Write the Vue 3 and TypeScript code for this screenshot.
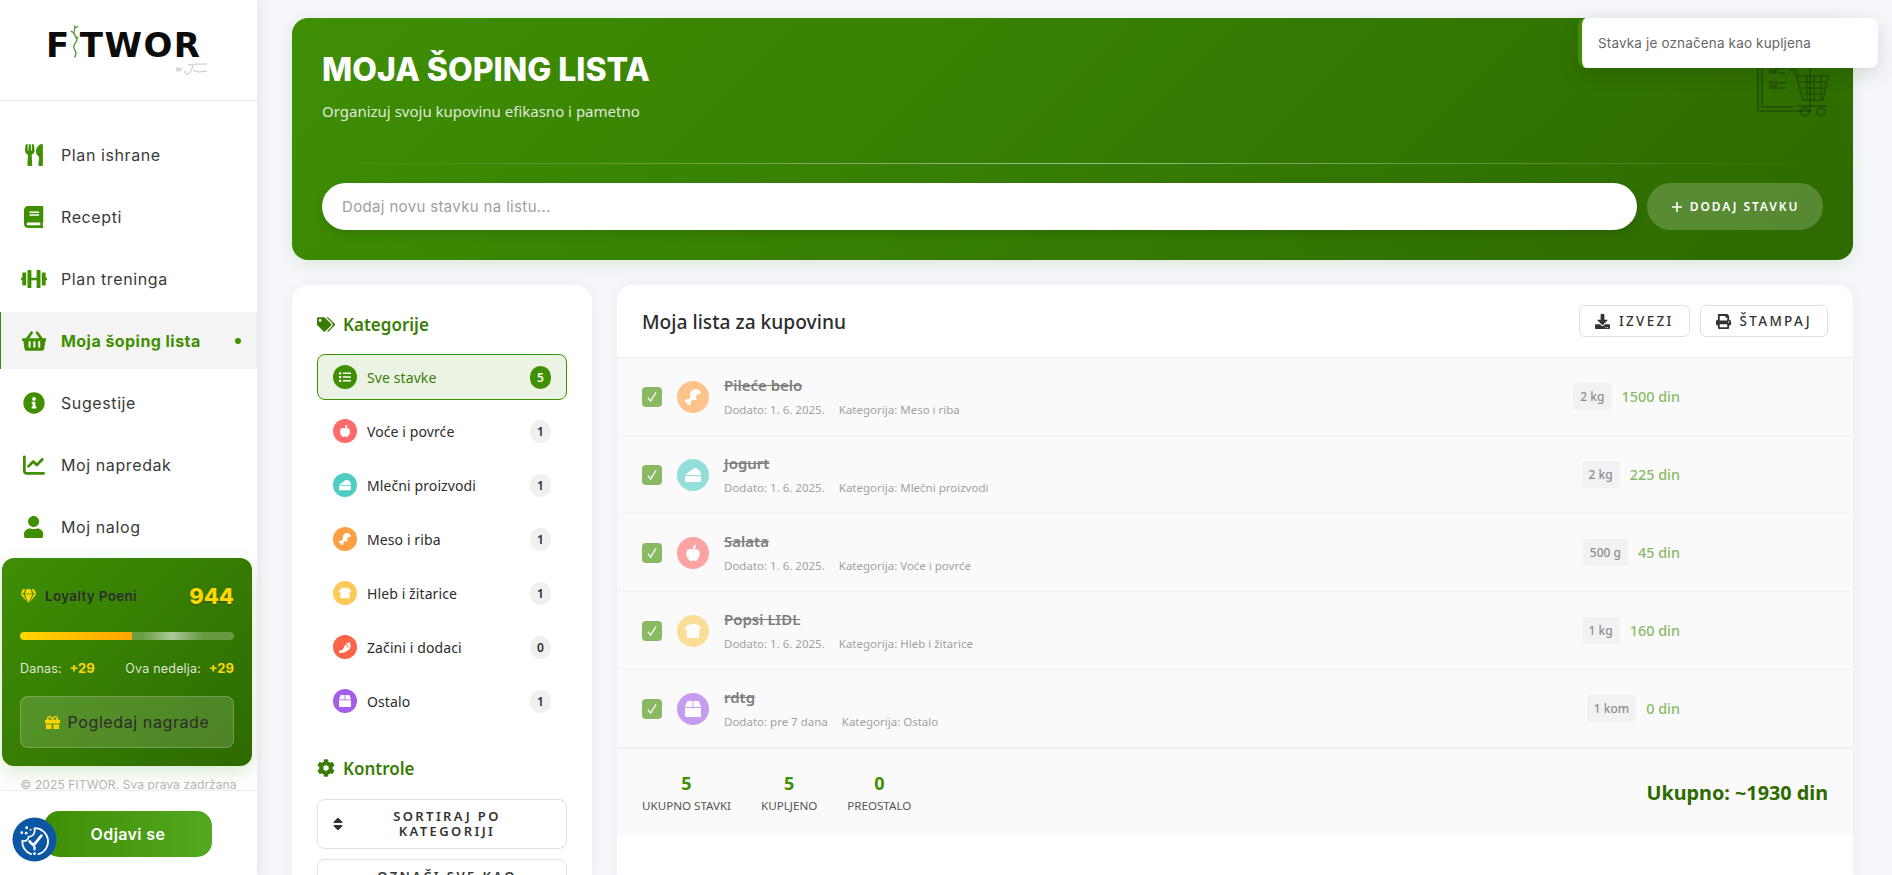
<script setup lang="ts">
const icons: Record<string, { box: string; d: string }> = {
  utensils: { box: '0 0 416 512', d: 'M207.9 15.2c.8 4.7 16.1 94.5 16.1 128.8 0 52.3-27.8 89.6-68.9 104.6L168 486.7c.7 13.7-10.2 25.3-24 25.3H80c-13.7 0-24.7-11.5-24-25.3l12.9-238.1C27.7 233.6 0 196.2 0 144 0 109.6 15.3 19.9 16.1 15.2 19.3-5.1 61.4-5.4 64 16.3v141.2c1.3 3.4 15.1 3.2 16 0 1.4-25.3 7.9-139.2 8-141.8 3.3-20.8 44.7-20.8 47.9 0 .2 2.7 6.6 116.5 8 141.8.9 3.2 14.8 3.4 16 0V16.3c2.6-21.6 44.8-21.4 48-1.1zm119.2 285.7l-15 185.1c-1.2 14 9.9 26 23.9 26h56c13.3 0 24-10.7 24-24V24c0-13.2-10.7-24-24-24-82.5 0-221.4 178.5-64.9 300.9z' },
  book: { box: '0 0 448 512', d: 'M448 360V24c0-13.3-10.7-24-24-24H96C43 0 0 43 0 96v320c0 53 43 96 96 96h328c13.3 0 24-10.7 24-24v-16c0-7.5-3.5-14.3-8.9-18.7-4.2-15.4-4.2-59.3 0-74.7 5.4-4.3 8.9-11.1 8.9-18.6zM128 134c0-3.3 2.7-6 6-6h212c3.3 0 6 2.7 6 6v20c0 3.3-2.7 6-6 6H134c-3.3 0-6-2.7-6-6v-20zm0 64c0-3.3 2.7-6 6-6h212c3.3 0 6 2.7 6 6v20c0 3.3-2.7 6-6 6H134c-3.3 0-6-2.7-6-6v-20zm253.4 250H96c-17.7 0-32-14.3-32-32 0-17.6 14.4-32 32-32h285.4c-1.9 17.1-1.9 46.9 0 64z' },
  dumbbell: { box: '0 0 640 512', d: 'M104 96H56c-13.3 0-24 10.7-24 24v104H8c-4.4 0-8 3.6-8 8v48c0 4.4 3.6 8 8 8h24v104c0 13.3 10.7 24 24 24h48c13.3 0 24-10.7 24-24V120c0-13.3-10.7-24-24-24zm528 128h-24V120c0-13.3-10.7-24-24-24h-48c-13.3 0-24 10.7-24 24v272c0 13.3 10.7 24 24 24h48c13.3 0 24-10.7 24-24V288h24c4.4 0 8-3.6 8-8v-48c0-4.4-3.6-8-8-8zM456 32h-48c-13.3 0-24 10.7-24 24v168H256V56c0-13.3-10.7-24-24-24h-48c-13.3 0-24 10.7-24 24v400c0 13.3 10.7 24 24 24h48c13.3 0 24-10.7 24-24V288h128v168c0 13.3 10.7 24 24 24h48c13.3 0 24-10.7 24-24V56c0-13.3-10.7-24-24-24z' },
  basket: { box: '0 0 576 512', d: 'M576 216v16c0 13.255-10.745 24-24 24h-8l-26.113 182.788C514.509 462.435 494.257 480 470.37 480H105.63c-23.887 0-44.139-17.565-47.518-41.212L32 256h-8c-13.255 0-24-10.745-24-24v-16c0-13.255 10.745-24 24-24h67.341l106.78-146.821c10.395-14.292 30.407-17.453 44.701-7.058 14.293 10.395 17.453 30.408 7.058 44.701L170.477 192h235.046L326.12 82.821c-10.395-14.292-7.234-34.306 7.059-44.701 14.291-10.395 34.306-7.235 44.701 7.058L484.659 192H552c13.255 0 24 10.745 24 24zM312 392V280c0-13.255-10.745-24-24-24s-24 10.745-24 24v112c0 13.255 10.745 24 24 24s24-10.745 24-24zm112 0V280c0-13.255-10.745-24-24-24s-24 10.745-24 24v112c0 13.255 10.745 24 24 24s24-10.745 24-24zm-224 0V280c0-13.255-10.745-24-24-24s-24 10.745-24 24v112c0 13.255 10.745 24 24 24s24-10.745 24-24z' },
  info: { box: '0 0 512 512', d: 'M256 8C119.043 8 8 119.083 8 256c0 136.997 111.043 248 248 248s248-111.003 248-248C504 119.083 392.957 8 256 8zm0 110c23.196 0 42 18.804 42 42s-18.804 42-42 42-42-18.804-42-42 18.804-42 42-42zm56 254c0 6.627-5.373 12-12 12h-88c-6.627 0-12-5.373-12-12v-24c0-6.627 5.373-12 12-12h12v-64h-12c-6.627 0-12-5.373-12-12v-24c0-6.627 5.373-12 12-12h64c6.627 0 12 5.373 12 12v100h12c6.627 0 12 5.373 12 12v24z' },
  chart: { box: '0 0 512 512', d: 'M64 64c0-17.7-14.3-32-32-32S0 46.3 0 64V400c0 44.2 35.8 80 80 80H480c17.7 0 32-14.3 32-32s-14.3-32-32-32H80c-8.8 0-16-7.2-16-16V64zm406.6 86.6c12.5-12.5 12.5-32.8 0-45.3s-32.8-12.5-45.3 0L320 210.7l-57.4-57.4c-12.5-12.5-32.8-12.5-45.3 0l-112 112c-12.5 12.5-12.5 32.8 0 45.3s32.8 12.5 45.3 0L240 221.3l57.4 57.4c12.5 12.5 32.8 12.5 45.3 0l128-128z' },
  user: { box: '0 0 448 512', d: 'M224 256c70.7 0 128-57.3 128-128S294.7 0 224 0 96 57.3 96 128s57.3 128 128 128zm89.6 32h-16.7c-22.2 10.2-46.9 16-72.9 16s-50.6-5.8-72.9-16h-16.7C60.2 288 0 348.2 0 422.4V464c0 26.5 21.5 48 48 48h352c26.5 0 48-21.5 48-48v-41.6c0-74.2-60.2-134.4-134.4-134.4z' },
  gem: { box: '0 0 576 512', d: 'M485.5 0L576 160H474.9L405.7 0h79.8zm-128 0l69.2 160H149.3L218.5 0h139zm-267 0h79.8l-69.2 160H0L90.5 0zM0 192h100.7l123 251.7c1.5 3.1-2.7 5.9-5 3.3L0 192zm148.2 0h279.6l-137 318.2c-1 2.4-4.5 2.4-5.5 0L148.2 192zm204.1 251.7l123-251.7H576L357.3 446.9c-2.3 2.7-6.5-.1-5-3.2z' },
  gift: { box: '0 0 512 512', d: 'M32 448c0 17.7 14.3 32 32 32h160V320H32v128zm256 32h160c17.7 0 32-14.3 32-32V320H288v160zm192-320h-42.1c6.2-12.1 10.1-25.5 10.1-40 0-48.5-39.5-88-88-88-41.6 0-68.5 21.3-103 68.3-34.5-47-61.4-68.3-103-68.3-48.5 0-88 39.5-88 88 0 14.5 3.8 27.9 10.1 40H32c-17.7 0-32 14.3-32 32v80c0 8.8 7.2 16 16 16h480c8.8 0 16-7.2 16-16v-80c0-17.7-14.3-32-32-32zm-326.1 0c-22.1 0-40-17.9-40-40s17.9-40 40-40c19.9 0 34.6 3.3 86.1 80h-86.1zm206.1 0h-86.1c51.4-76.5 65.7-80 86.1-80 22.1 0 40 17.9 40 40s-17.9 40-40 40z' },
  tags: { box: '0 0 640 512', d: 'M497.941 225.941L286.059 14.059A48 48 0 0 0 252.118 0H48C21.49 0 0 21.49 0 48v204.118a48 48 0 0 0 14.059 33.941l211.882 211.882c18.744 18.745 49.136 18.746 67.882 0l204.118-204.118c18.745-18.745 18.745-49.137 0-67.882zM112 160c-26.51 0-48-21.49-48-48s21.49-48 48-48 48 21.49 48 48-21.49 48-48 48zm513.941 133.823L421.823 497.941c-18.745 18.745-49.137 18.745-67.882 0l-.36-.36L527.64 323.522c16.999-16.999 26.36-39.6 26.36-63.64s-9.362-46.641-26.36-63.64L331.397 0h48.721a48 48 0 0 1 33.941 14.059l211.882 211.882c18.745 18.745 18.745 49.137 0 67.882z' },
  cog: { box: '0 0 512 512', d: 'M487.4 315.7l-42.6-24.6c4.3-23.2 4.3-47 0-70.2l42.6-24.6c4.9-2.8 7.1-8.6 5.5-14-11.1-35.6-30-67.8-54.7-94.6-3.8-4.1-10-5.1-14.8-2.3L380.8 110c-17.9-15.4-38.5-27.3-60.8-35.1V25.8c0-5.6-3.9-10.5-9.4-11.7-36.7-8.2-74.3-7.8-109.2 0-5.5 1.2-9.4 6.1-9.4 11.7V75c-22.2 7.9-42.8 19.8-60.8 35.1L88.7 85.5c-4.9-2.8-11-1.9-14.8 2.3-24.7 26.7-43.6 58.9-54.7 94.6-1.7 5.4.6 11.2 5.5 14L67.3 221c-4.3 23.2-4.3 47 0 70.2l-42.6 24.6c-4.9 2.8-7.1 8.6-5.5 14 11.1 35.6 30 67.8 54.7 94.6 3.8 4.1 10 5.1 14.8 2.3l42.6-24.6c17.9 15.4 38.5 27.3 60.8 35.1v49.2c0 5.6 3.9 10.5 9.4 11.7 36.7 8.2 74.3 7.8 109.2 0 5.5-1.2 9.4-6.1 9.4-11.7v-49.2c22.2-7.9 42.8-19.8 60.8-35.1l42.6 24.6c4.9 2.8 11 1.9 14.8-2.3 24.7-26.7 43.6-58.9 54.7-94.6 1.5-5.5-.7-11.3-5.6-14.1zM256 336c-44.1 0-80-35.9-80-80s35.9-80 80-80 80 35.9 80 80-35.9 80-80 80z' },
  list: { box: '0 0 512 512', d: 'M80 368H16a16 16 0 0 0-16 16v64a16 16 0 0 0 16 16h64a16 16 0 0 0 16-16v-64a16 16 0 0 0-16-16zm0-320H16A16 16 0 0 0 0 64v64a16 16 0 0 0 16 16h64a16 16 0 0 0 16-16V64a16 16 0 0 0-16-16zm0 160H16a16 16 0 0 0-16 16v64a16 16 0 0 0 16 16h64a16 16 0 0 0 16-16v-64a16 16 0 0 0-16-16zm416 176H176a16 16 0 0 0-16 16v32a16 16 0 0 0 16 16h320a16 16 0 0 0 16-16v-32a16 16 0 0 0-16-16zm0-320H176a16 16 0 0 0-16 16v32a16 16 0 0 0 16 16h320a16 16 0 0 0 16-16V80a16 16 0 0 0-16-16zm0 160H176a16 16 0 0 0-16 16v32a16 16 0 0 0 16 16h320a16 16 0 0 0 16-16v-32a16 16 0 0 0-16-16z' },
  apple: { box: '0 0 448 512', d: 'M326 130c-45-8-72 14-102 14s-57-22-102-14C62 140 10 190 10 270c0 110 78 242 150 242 28 0 44-18 64-18s36 18 64 18c72 0 150-132 150-242 0-80-52-130-112-140zM240 128c-9-2-16-10-16-20V80c0-44 36-80 80-80 9 0 16 7 16 16v32c0 44-36 80-80 80z' },
  cheese: { box: '0 0 512 512', d: 'M0 288v160a32 32 0 0 0 32 32h448a32 32 0 0 0 32-32V288zM299.83 32a32 32 0 0 0-21.13 7L0 256h512c0-119.89-94-217.8-212.17-224z' },
  drumstick: { box: '0 0 512 512', d: 'M462.8 49.57a169.44 169.44 0 0 0-239.5 0C187.82 85 160.13 128 160.13 192v85.83l-40.62 40.59c-9.7 9.69-24 11.07-36.78 6a60.33 60.33 0 0 0-65 98.72C33 438.39 54.24 442.7 73.85 438.21c-4.5 19.6-.18 40.83 15.1 56.1a60.35 60.35 0 0 0 98.8-65c-5.09-12.73-3.72-27 6-36.75L234.36 352h85.89a187.87 187.87 0 0 0 61.89-10c-39.64-43.89-39.83-110.23 1.05-151.07 34.38-34.36 86.76-39.46 128.74-16.8 1.3-44.96-14.81-90.28-49.13-124.56z' },
  bread: { box: '0 0 576 512', d: 'M288 0C108 0 0 93.4 0 169.14 0 199.44 24.24 224 64 224v256c0 17.67 16.12 32 36 32h376c19.88 0 36-14.33 36-32V224c39.76 0 64-24.56 64-54.86C576 93.4 468 0 288 0z' },
  pepper: { box: '0 0 512 512', d: 'M330.67 263.12V173.4l-52.75-24.22C219.44 218.76 197.58 400 56 400a56 56 0 0 0 0 112c212.64 0 370.65-122.87 419.18-210.34l-37.05-38.54zM462 135c32-60 15-93 5-102-2-2-6-2-9 0-4 5-10 20-23 54-16-10-35-15-51-15-35 0-64 21-78 54l56 26v87l60 8 47 48c22-30 34-63 34-94 0-24-16-42-41-66z' },
  box: { box: '0 0 512 512', d: 'M509.5 184.6L458.9 32.8C452.4 13.2 434.1 0 413.4 0H272v192h238.7c-.4-2.5-.4-5-1.2-7.4zM240 0H98.6c-20.7 0-39 13.2-45.5 32.8L2.5 184.6c-.8 2.4-.8 4.9-1.2 7.4H240V0zM0 224v240c0 26.5 21.5 48 48 48h416c26.5 0 48-21.5 48-48V224H0z' },
  sort: { box: '0 0 320 512', d: 'M41 288h238c21.4 0 32.1 25.9 17 41L177 448c-9.4 9.4-24.6 9.4-33.9 0L24 329c-15.1-15.1-4.4-41 17-41zm255-105L177 64c-9.4-9.4-24.6-9.4-33.9 0L24 183c-15.1 15.1-4.4 41 17 41h238c21.4 0 32.1-25.9 17-41z' },
  download: { box: '0 0 512 512', d: 'M216 0h80c13.3 0 24 10.7 24 24v168h87.7c17.8 0 26.7 21.5 14.1 34.1L269.7 378.3c-7.5 7.5-19.8 7.5-27.3 0L90.1 226.1c-12.6-12.6-3.7-34.1 14.1-34.1H192V24c0-13.3 10.7-24 24-24zm296 376v112c0 13.3-10.7 24-24 24H24c-13.3 0-24-10.7-24-24V376c0-13.3 10.7-24 24-24h146.7l49 49c20.1 20.1 52.5 20.1 72.6 0l49-49H488c13.3 0 24 10.7 24 24zm-124 88c0-11-9-20-20-20s-20 9-20 20 9 20 20 20 20-9 20-20zm64 0c0-11-9-20-20-20s-20 9-20 20 9 20 20 20 20-9 20-20z' },
  print: { box: '0 0 512 512', d: 'M448 192V77.25c0-8.49-3.37-16.62-9.37-22.63L393.37 9.37c-6-6-14.14-9.37-22.63-9.37H96C78.33 0 64 14.33 64 32v160c-35.35 0-64 28.65-64 64v112c0 8.84 7.16 16 16 16h48v96c0 17.67 14.33 32 32 32h320c17.67 0 32-14.33 32-32v-96h48c8.84 0 16-7.16 16-16V256c0-35.35-28.65-64-64-64zm-64 256H128v-96h256v96zm0-224H128V64h192v48c0 8.84 7.16 16 16 16h48v96zm48 72c-13.25 0-24-10.75-24-24 0-13.26 10.75-24 24-24s24 10.74 24 24c0 13.25-10.75 24-24 24z' }
}

const navItems = [
  { label: 'Plan ishrane', icon: 'utensils' },
  { label: 'Recepti', icon: 'book' },
  { label: 'Plan treninga', icon: 'dumbbell' },
  { label: 'Moja šoping lista', icon: 'basket', active: true },
  { label: 'Sugestije', icon: 'info' },
  { label: 'Moj napredak', icon: 'chart' },
  { label: 'Moj nalog', icon: 'user' }
]

const categories = [
  { label: 'Sve stavke', icon: 'list', color: '#3f8f00', count: 5, active: true },
  { label: 'Voće i povrće', icon: 'apple', color: '#ff6b6b', count: 1 },
  { label: 'Mlečni proizvodi', icon: 'cheese', color: '#4ecdc4', count: 1 },
  { label: 'Meso i riba', icon: 'drumstick', color: '#ff9f43', count: 1 },
  { label: 'Hleb i žitarice', icon: 'bread', color: '#feca57', count: 1 },
  { label: 'Začini i dodaci', icon: 'pepper', color: '#ff6348', count: 0 },
  { label: 'Ostalo', icon: 'box', color: '#a55eea', count: 1 }
]

const items = [
  { name: 'Pileće belo', added: '1. 6. 2025.', category: 'Meso i riba', icon: 'drumstick', color: '#ff9f43', qty: '2 kg', price: '1500 din' },
  { name: 'Jogurt', added: '1. 6. 2025.', category: 'Mlečni proizvodi', icon: 'cheese', color: '#4ecdc4', qty: '2 kg', price: '225 din' },
  { name: 'Salata', added: '1. 6. 2025.', category: 'Voće i povrće', icon: 'apple', color: '#ff6b6b', qty: '500 g', price: '45 din' },
  { name: 'Popsi LIDL', added: '1. 6. 2025.', category: 'Hleb i žitarice', icon: 'bread', color: '#feca57', qty: '1 kg', price: '160 din' },
  { name: 'rdtg', added: 'pre 7 dana', category: 'Ostalo', icon: 'box', color: '#a55eea', qty: '1 kom', price: '0 din' }
]

const stats = [
  { value: 5, label: 'Ukupno stavki' },
  { value: 5, label: 'Kupljeno' },
  { value: 0, label: 'Preostalo' }
]
</script>

<template>
  <div class="app">
    <aside class="sidebar">
      <div class="logo-box">
        <div class="logo">
          <span>F</span>
          <svg class="vine" viewBox="0 0 12 38" width="11" height="38">
            <path d="M6 2c3 4-3 6 0 10s4 5 1 9-2 6 0 9 0 4-1 7" fill="none" stroke="#4f9a33" stroke-width="1.5" />
            <path d="M6 5l4-2M5 10L2 8M7 16l3-1" fill="none" stroke="#4f9a33" stroke-width="1.3" />
          </svg>
          <span>TWOR</span>
          <span class="logo-sign">
            <i>by</i>
            <svg viewBox="0 0 26 14" width="26" height="14">
              <path d="M6 3c6-1 12-1 19-1M11 3c-1 4-2 8-5 9S2 10 4 8M11 9c2-1 4 1 6 1s5-1 8-1" fill="none" stroke="#aaa" stroke-width=".7" />
            </svg>
          </span>
        </div>
      </div>

      <div class="side-scroll">
        <nav class="nav">
          <a v-for="item in navItems" :key="item.label" class="nav-item" :class="{ active: item.active }">
            <span class="nav-icon">
              <svg :viewBox="icons[item.icon].box" fill="currentColor"><path :d="icons[item.icon].d" /></svg>
            </span>
            <span class="nav-label">{{ item.label }}</span>
            <span v-if="item.active" class="nav-dot"></span>
          </a>
        </nav>

        <section class="loyalty">
          <div class="loyalty-head">
            <svg class="gem" :viewBox="icons.gem.box" fill="currentColor"><path :d="icons.gem.d" /></svg>
            <span class="loyalty-title">Loyalty Poeni</span>
            <span class="loyalty-points">944</span>
          </div>
          <div class="bar"><div class="bar-fill"></div><div class="bar-shine"></div></div>
          <div class="loyalty-stats">
            <span>Danas: <b>+29</b></span>
            <span>Ova nedelja: <b>+29</b></span>
          </div>
          <button class="rewards">
            <svg :viewBox="icons.gift.box" fill="currentColor"><path :d="icons.gift.d" /></svg>
            Pogledaj nagrade
          </button>
        </section>
        <p class="copyright">© 2025 FITWOR. Sva prava zadržana</p>
      </div>

      <div class="side-foot">
        <button class="logout">Odjavi se</button>
      </div>
    </aside>

    <main class="main">
      <header class="banner">
        <h1>MOJA ŠOPING LISTA</h1>
        <p>Organizuj svoju kupovinu efikasno i pametno</p>
        <svg class="banner-art" viewBox="0 0 72 58" fill="none" stroke="currentColor" stroke-width="2">
          <path d="M1 1h52v50H1zM5 1v46h32" />
          <path d="M13 7h6v6h-6zM13 22h6v6h-6zM22 8h8M22 13h6M22 23h8M22 28h6M14 10l2 2 5-5M14 25l2 2 5-5" />
          <path d="M32 10h6l8 30h20l5-24H40M43 22h27M45 28h25M47 34h22M50 16v24M57 16v24M64 16v24" />
          <circle cx="48" cy="52" r="4" /><circle cx="64" cy="52" r="4" />
          <path d="M40 46h30" />
        </svg>
        <div class="banner-line"></div>
        <div class="add-row">
          <input class="add-input" type="text" placeholder="Dodaj novu stavku na listu..." />
          <button class="add-btn">
            <svg viewBox="0 0 12 12" width="12" height="12"><path d="M6 1v10M1 6h10" stroke="#fff" stroke-width="1.6" /></svg>
            DODAJ STAVKU
          </button>
        </div>
      </header>

      <div class="content">
        <section class="panel">
          <h3 class="panel-title">
            <svg class="tag-icon" :viewBox="icons.tags.box" fill="currentColor"><path :d="icons.tags.d" /></svg>
            Kategorije
          </h3>
          <ul class="cats">
            <li v-for="c in categories" :key="c.label" class="cat" :class="{ active: c.active }">
              <span class="cat-icon" :style="{ background: c.color }">
                <svg :viewBox="icons[c.icon].box" fill="#fff"><path :d="icons[c.icon].d" /></svg>
              </span>
              <span class="cat-label">{{ c.label }}</span>
              <span class="cat-count">{{ c.count }}</span>
            </li>
          </ul>

          <h3 class="panel-title controls-title">
            <svg class="cog-icon" :viewBox="icons.cog.box" fill="currentColor"><path :d="icons.cog.d" /></svg>
            Kontrole
          </h3>
          <button class="ctrl">
            <svg class="sort-icon" :viewBox="icons.sort.box" fill="currentColor"><path :d="icons.sort.d" /></svg>
            <span>SORTIRAJ PO KATEGORIJI</span>
          </button>
          <button class="ctrl">
            <svg class="sort-icon" :viewBox="icons.sort.box" fill="currentColor"><path :d="icons.sort.d" /></svg>
            <span>OZNAČI SVE KAO KUPLJENO</span>
          </button>
        </section>

        <section class="list-panel">
          <div class="list-head">
            <h2>Moja lista za kupovinu</h2>
            <div class="list-actions">
              <button class="tool">
                <svg :viewBox="icons.download.box" fill="currentColor"><path :d="icons.download.d" /></svg>
                IZVEZI
              </button>
              <button class="tool">
                <svg :viewBox="icons.print.box" fill="currentColor"><path :d="icons.print.d" /></svg>
                ŠTAMPAJ
              </button>
            </div>
          </div>

          <div v-for="item in items" :key="item.name" class="row">
            <span class="check">
              <svg viewBox="0 0 12 12" width="14" height="14"><path d="M2.5 6.5l2.3 3L9.5 2" fill="none" stroke="#fff" stroke-width="1.1" /></svg>
            </span>
            <span class="row-icon" :style="{ background: item.color }">
              <svg :viewBox="icons[item.icon].box" fill="#fff"><path :d="icons[item.icon].d" /></svg>
            </span>
            <div class="row-info">
              <div class="row-name">{{ item.name }}</div>
              <div class="row-meta">
                <span>Dodato: {{ item.added }}</span>
                <span>Kategorija: {{ item.category }}</span>
              </div>
            </div>
            <span class="qty">{{ item.qty }}</span>
            <span class="price">{{ item.price }}</span>
          </div>

          <div class="list-foot">
            <div class="stats">
              <div v-for="s in stats" :key="s.label" class="stat">
                <div class="stat-value">{{ s.value }}</div>
                <div class="stat-label">{{ s.label }}</div>
              </div>
            </div>
            <div class="total">Ukupno: ~1930 din</div>
          </div>
        </section>
      </div>
    </main>

    <div class="toast">Stavka je označena kao kupljena</div>

    <button class="cookie" aria-label="Kolačići">
      <svg viewBox="0 0 46 46" width="45" height="45">
        <circle cx="23" cy="23" r="22.5" fill="#0b57a4" />
        <g fill="none" stroke="#fff" stroke-linecap="round" stroke-linejoin="round">
          <path d="M10.5 24.5c3.5 1 6.5-1.5 6.5-4.5 3.5.5 7-2.5 6-8.5A13.5 13.5 0 0 1 27 38M19.5 38a13.5 13.5 0 0 1-9-13.5" stroke-width="1.8" />
          <path d="M18 25l4 4 8-10" stroke-width="2.8" />
          <path d="M23 31v2" stroke-width="2.4" />
        </g>
        <g fill="#fff"><circle cx="15" cy="11" r="1.5" /><circle cx="10" cy="16" r="1.4" /><circle cx="14.5" cy="16.5" r="1.4" /><circle cx="19" cy="13" r="1" /><circle cx="23" cy="37.5" r="1.4" /></g>
      </svg>
    </button>
  </div>
</template>

<style>
html, body { margin: 0; background: #f4f6f9; }
</style>

<style scoped>
* { box-sizing: border-box; }

.app {
  display: flex;
  height: 875px;
  overflow: hidden;
  position: relative;
  background: #f4f6f9;
  font-family: "Noto Sans", sans-serif;
  color: #2c2c2c;
}

button { font-family: inherit; cursor: pointer; }

/* sidebar */
.sidebar {
  width: 257px;
  flex: none;
  display: flex;
  flex-direction: column;
  background: #fff;
  box-shadow: 2px 0 12px rgba(0, 0, 0, 0.08);
  z-index: 2;
  font-family: Inter, sans-serif;
}

.logo-box {
  height: 101px;
  flex: none;
  padding: 28px 0 0 46px;
  border-bottom: 1px solid #ececec;
}

.logo {
  display: flex;
  align-items: flex-start;
  position: relative;
  font-family: "DejaVu Sans", sans-serif;
  font-size: 34px;
  font-weight: 700;
  line-height: 34px;
  color: #0c0c0c;
  letter-spacing: 1.5px;
}

.vine { margin: -6px 0 0 -2px; flex: none; }

.logo-sign {
  position: absolute;
  left: 130px;
  top: 34px;
  display: flex;
  align-items: center;
  font-family: "Liberation Serif", serif;
  font-size: 6px;
  line-height: 14px;
  font-weight: 400;
  color: #999;
  letter-spacing: 0;
}

.side-scroll {
  flex: 1;
  overflow: hidden;
  min-height: 0;
}

.nav {
  display: flex;
  flex-direction: column;
  gap: 5px;
  padding-top: 25px;
}

.nav-item {
  display: flex;
  align-items: center;
  height: 57px;
  padding: 0 16px 0 21px;
  font-size: 16px;
  letter-spacing: 0.6px;
  color: #3a3a3a;
}

.nav-item.active {
  background: #f4f4f4;
  border-left: 1px solid #3f8f00;
  padding-left: 20px;
  color: #3f8f00;
  font-weight: 700;
  letter-spacing: 0.45px;
}

.nav-icon {
  width: 26px;
  height: 22px;
  display: flex;
  justify-content: center;
  color: #3f8f00;
  margin-right: 14px;
}

.nav-icon svg { height: 22px; max-width: 27px; }

.nav-label { flex: 1; }

.nav-dot {
  width: 6px;
  height: 6px;
  border-radius: 50%;
  background: #3f8f00;
}

.loyalty {
  margin: 3px 5px 0 2px;
  height: 208px;
  padding: 18px 18px 0;
  border-radius: 12px;
  background: linear-gradient(135deg, #3f8f05 0%, #2d6a00 100%);
  box-shadow: 0 6px 20px rgba(63, 143, 0, 0.2);
}

.loyalty-head {
  display: flex;
  align-items: center;
  height: 40px;
}

.gem {
  width: 17px;
  height: 14px;
  color: #ffd700;
  margin-right: 8px;
}

.loyalty-title {
  flex: 1;
  font-size: 13.5px;
  font-weight: 600;
  letter-spacing: 0.3px;
  color: #2c2c2c;
}

.loyalty-points {
  font-size: 22px;
  font-weight: 800;
  color: #ffd700;
  text-shadow: 0 1px 2px rgba(0, 0, 0, 0.3);
}

.bar {
  height: 8px;
  margin-top: 16px;
  border-radius: 4px;
  background: rgba(255, 255, 255, 0.25);
  position: relative;
  overflow: hidden;
}

.bar-fill {
  width: 52.5%;
  height: 100%;
  background: linear-gradient(90deg, #ffd700, #ffa500);
  border-radius: 4px 0 0 4px;
}

.bar-shine {
  position: absolute;
  left: 122px;
  top: 0;
  width: 60px;
  height: 100%;
  background: linear-gradient(100deg, transparent, rgba(255, 255, 255, 0.45), transparent);
}

.loyalty-stats {
  display: flex;
  justify-content: space-between;
  margin-top: 19px;
  font-size: 12.5px;
  letter-spacing: 0.2px;
  line-height: 18px;
  color: rgba(255, 255, 255, 0.85);
}

.loyalty-stats b {
  color: #ffd700;
  font-size: 13px;
  font-weight: 700;
  letter-spacing: 0;
  margin-left: 4px;
}

.rewards {
  width: 100%;
  height: 52px;
  margin-top: 18px;
  display: flex;
  align-items: center;
  justify-content: center;
  gap: 8px;
  border: 1px solid rgba(255, 255, 255, 0.2);
  border-radius: 8px;
  background: rgba(255, 255, 255, 0.15);
  color: #2c2c2c;
  font-family: Inter, sans-serif;
  font-size: 16px;
  letter-spacing: 0.6px;
}

.rewards svg {
  width: 15px;
  height: 15px;
  color: #ffd700;
}

.copyright {
  margin: 10px 0 0;
  font-size: 12px;
  letter-spacing: 0.1px;
  line-height: 18px;
  text-align: center;
  color: #b4b4b4;
}

.side-foot {
  flex: none;
  height: 85px;
  border-top: 1px solid #ececec;
  padding: 20px 0 0 44px;
}

.logout {
  width: 168px;
  height: 46px;
  border: none;
  border-radius: 15px;
  background: linear-gradient(90deg, #3f8f05, #52a81f);
  color: #fff;
  font-family: Inter, sans-serif;
  font-size: 16px;
  font-weight: 600;
  letter-spacing: 0.4px;
}

/* main */
.main {
  flex: 1;
  min-width: 0;
  padding: 18px 39px 0 35px;
  display: flex;
  flex-direction: column;
}

.banner {
  height: 242px;
  flex: none;
  position: relative;
  padding: 30px 30px 0;
  border-radius: 16px;
  background: linear-gradient(135deg, #3f8f05 0%, #2d6a00 100%);
  box-shadow: 0 4px 14px rgba(63, 143, 0, 0.12);
}

.banner h1 {
  margin: 0;
  font-family: Inter, sans-serif;
  font-size: 32px;
  line-height: 44px;
  font-weight: 800;
  color: #fff;
}

.banner p {
  margin: 8px 0 0;
  font-size: 15px;
  line-height: 22px;
  color: rgba(255, 255, 255, 0.85);
}

.banner-art {
  position: absolute;
  right: 24px;
  top: 42px;
  width: 72px;
  height: 58px;
  color: rgba(0, 0, 0, 0.22);
}

.banner-line {
  position: absolute;
  left: 30px;
  right: 30px;
  top: 145px;
  height: 1px;
  background: linear-gradient(90deg, transparent, rgba(255, 255, 255, 0.5), transparent);
}

.add-row {
  display: flex;
  gap: 10px;
  margin-top: 61px;
  height: 47px;
}

.add-input {
  flex: 1;
  border: none;
  outline: none;
  padding: 0 20px;
  border-radius: 24px;
  background: #fff;
  font-family: Inter, sans-serif;
  font-size: 15px;
  box-shadow: 0 4px 10px rgba(0, 0, 0, 0.12);
}

.add-input::placeholder { color: #a0a0a0; opacity: 1; letter-spacing: 0.35px; }

.add-btn {
  width: 176px;
  display: flex;
  align-items: center;
  justify-content: center;
  gap: 7px;
  border: none;
  border-radius: 24px;
  background: rgba(255, 255, 255, 0.2);
  color: #fff;
  font-size: 12px;
  font-weight: 600;
  letter-spacing: 1.9px;
}

.content {
  display: flex;
  gap: 25px;
  margin-top: 25px;
  flex: 1;
  min-height: 0;
}

.panel {
  width: 300px;
  flex: none;
  padding: 24px 25px 25px;
  background: #fff;
  border-radius: 16px 16px 0 0;
  box-shadow: 0 2px 16px rgba(0, 0, 0, 0.04);
  overflow: hidden;
}

.panel-title {
  display: flex;
  align-items: center;
  margin: 0;
  height: 30px;
  font-size: 17px;
  font-weight: 600;
  color: #3a7d05;
}

.tag-icon { width: 18px; height: 15px; margin-right: 8px; }
.cog-icon { width: 18px; height: 18px; margin-right: 8px; }

.cats {
  list-style: none;
  margin: 15px 0 0;
  padding: 0;
  display: flex;
  flex-direction: column;
  gap: 8px;
}

.cat {
  display: flex;
  align-items: center;
  height: 46px;
  padding: 0 15px;
  border-radius: 8px;
  border: 1px solid transparent;
  font-size: 14px;
  letter-spacing: 0.1px;
}

.cat.active {
  background: #ebf3e5;
  border-color: #3f8f00;
  color: #3a7d05;
}

.cat-icon {
  width: 24px;
  height: 24px;
  flex: none;
  border-radius: 50%;
  display: flex;
  align-items: center;
  justify-content: center;
  margin-right: 10px;
}

.cat-icon svg { width: 12px; height: 12px; }

.cat-label { flex: 1; }

.cat-count {
  min-width: 21px;
  height: 23px;
  padding: 0 6px;
  border-radius: 12px;
  background: #f0f0f0;
  text-align: center;
  font-size: 12px;
  font-weight: 600;
  line-height: 23px;
}

.cat.active .cat-count {
  background: #3f8f00;
  color: #fff;
}

.controls-title { margin-top: 29px; }

.ctrl {
  width: 100%;
  display: flex;
  align-items: center;
  height: 50px;
  margin-top: 16px;
  padding: 0 15px;
  background: #fff;
  border: 1px solid #e0e0e0;
  border-radius: 8px;
  color: #333;
  font-size: 13px;
  font-weight: 600;
  line-height: 15px;
  letter-spacing: 2.4px;
}

.ctrl + .ctrl { margin-top: 10px; }

.ctrl span { flex: 1; text-align: center; padding: 0 8px; }

.sort-icon { width: 10px; height: 16px; flex: none; }

.list-panel {
  flex: 1;
  min-width: 0;
  background: #fff;
  border-radius: 16px 16px 0 0;
  box-shadow: 0 2px 16px rgba(0, 0, 0, 0.04);
  overflow: hidden;
}

.list-head {
  height: 73px;
  padding: 0 25px;
  display: flex;
  align-items: center;
  justify-content: space-between;
  border-bottom: 1px solid #ececec;
}

.list-head h2 {
  margin: 0;
  font-size: 19.2px;
  font-weight: 500;
  color: #2c2c2c;
}

.list-actions { display: flex; gap: 10px; }

.tool {
  height: 32px;
  display: flex;
  align-items: center;
  gap: 9px;
  padding: 0 15px;
  background: #fff;
  border: 1px solid #e0e0e0;
  border-radius: 6px;
  color: #333;
  font-size: 13.5px;
  font-weight: 500;
  letter-spacing: 2.3px;
}

.tool svg { width: 15px; height: 15px; }

.row {
  height: 78px;
  display: flex;
  align-items: center;
  padding: 0 173px 0 25px;
  background: #fafafa;
  border-bottom: 1px solid #f2f2f2;
}

.row > * { opacity: 0.6; }

.check {
  width: 20px;
  height: 20px;
  flex: none;
  border-radius: 4px;
  background: #3f8f00;
  display: flex;
  align-items: center;
  justify-content: center;
  margin-right: 15px;
}

.row-icon {
  width: 32px;
  height: 32px;
  flex: none;
  border-radius: 50%;
  display: flex;
  align-items: center;
  justify-content: center;
  margin-right: 15px;
}

.row-icon svg { width: 16px; height: 16px; }

.row-info { flex: 1; min-width: 0; }

.row-name {
  font-size: 15px;
  font-weight: 600;
  line-height: 20px;
  color: #2c2c2c;
  text-decoration: line-through;
}

.row-meta {
  display: flex;
  gap: 14px;
  margin-top: 7px;
  font-size: 11.5px;
  line-height: 16px;
  color: #666;
}

.qty {
  height: 27px;
  padding: 0 7px;
  border-radius: 4px;
  background: #eee;
  font-size: 12px;
  line-height: 27px;
  font-weight: 500;
  color: #444;
}

.price {
  margin-left: 10px;
  font-size: 14.4px;
  font-weight: 500;
  color: #3f8f00;
}

.list-foot {
  height: 89px;
  margin-top: -1px;
  padding: 0 25px;
  display: flex;
  align-items: center;
  justify-content: space-between;
  background: #fafafa;
  border-top: 2px solid #f0f0f0;
}

.stats { display: flex; gap: 30px; }

.stat { text-align: center; }

.stat-value {
  font-size: 18px;
  font-weight: 700;
  line-height: 24px;
  color: #3f8f00;
}

.stat-label {
  margin-top: 2px;
  font-size: 11.6px;
  line-height: 18px;
  text-transform: uppercase;
  color: #555;
}

.total {
  font-size: 19.8px;
  font-weight: 700;
  color: #2d6a00;
}

/* overlays */
.toast {
  position: absolute;
  top: 18px;
  left: 1578px;
  width: 300px;
  height: 50px;
  display: flex;
  align-items: center;
  padding-left: 16px;
  background: #fff;
  border-left: 4px solid #3f8f00;
  border-radius: 8px;
  box-shadow: 0 6px 20px rgba(0, 0, 0, 0.12);
  font-family: Inter, sans-serif;
  font-size: 13.5px;
  letter-spacing: 0.15px;
  color: #666;
  z-index: 5;
}

.cookie {
  position: absolute;
  left: 12px;
  top: 817px;
  width: 45px;
  height: 45px;
  padding: 0;
  border: none;
  background: none;
  z-index: 5;
}
</style>
